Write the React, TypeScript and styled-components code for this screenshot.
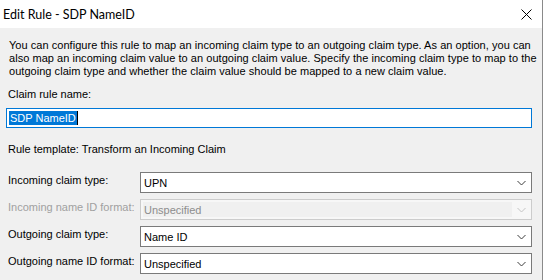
import React from "react";
import styled, { createGlobalStyle } from "styled-components";

const Global = createGlobalStyle`
  html, body {
    margin: 0;
    background: #fff;
  }
  body {
    font-family: "Liberation Sans", Arial, sans-serif;
    font-size: 11px;
    color: #000;
  }
`;

const Window = styled.div`
  width: 542px;
  height: 280px;
  border-right: 1px solid #8a8a8a;
  display: flex;
  flex-direction: column;
  overflow: hidden;
`;

const TitleBar = styled.div`
  height: 28px;
  flex-shrink: 0;
  background: #fff;
  display: flex;
  align-items: center;
  justify-content: space-between;
  padding: 0 10px 0 3px;
  font-family: Lato, "Noto Sans", sans-serif;
  font-size: 12.5px;
`;

const Close = styled.span`
  display: flex;
  align-items: center;
`;

const Content = styled.div`
  flex: 1;
  background: #f0f0f0;
  padding: 11px 10px 0 6px;
  display: flex;
  flex-direction: column;
`;

const Intro = styled.div`
  padding-left: 3px;
  line-height: 13px;
  white-space: nowrap;
  letter-spacing: 0.04px;
`;

const Label = styled.div<{ $disabled?: boolean }>`
  padding-left: 2px;
  line-height: 13px;
  color: ${(p) => (p.$disabled ? "#a0a0a0" : "#000")};
`;

const NameLabel = styled(Label)`
  margin-top: 10px;
`;

const TextBox = styled.div`
  margin-top: 7px;
  height: 18px;
  border: 1px solid #0078d7;
  background: #fff;
  display: flex;
  align-items: center;
  padding-left: 2px;
`;

const Selected = styled.span`
  background: #0078d7;
  color: #fff;
  line-height: 14px;
  padding: 0 1px;
`;

const Caret = styled.span`
  width: 1px;
  height: 14px;
  background: #000;
`;

const Template = styled(Label)`
  margin-top: 15px;
`;

const Rows = styled.div`
  margin-top: 16px;
  display: grid;
  grid-template-columns: 134px 392px;
  row-gap: 6px;
`;

const RowLabel = styled(Label)`
  align-self: start;
  padding-top: 2px;
`;

const Combo = styled.div<{ $disabled?: boolean }>`
  height: 19px;
  border: 1px solid ${(p) => (p.$disabled ? "#cccccc" : "#7a7a7a")};
  background: ${(p) => (p.$disabled ? "#f7f7f7" : "#fff")};
  display: flex;
  align-items: stretch;
`;

const ComboValue = styled.div<{ $disabled?: boolean }>`
  flex: 1;
  display: flex;
  align-items: center;
  margin: ${(p) => (p.$disabled ? "2px 0 2px 2px" : "0")};
  padding-left: ${(p) => (p.$disabled ? "1px" : "3px")};
  background: ${(p) => (p.$disabled ? "#f0f0f0" : "transparent")};
  color: ${(p) => (p.$disabled ? "#8d8d8d" : "#000")};
`;

const Arrow = styled.div`
  width: 19px;
  display: flex;
  align-items: center;
  justify-content: center;
`;

const Chevron = ({ color }: { color: string }) => (
  <svg width="9" height="6" viewBox="0 0 9 6">
    <polyline points="0.5,1 4.5,5 8.5,1" fill="none" stroke={color} strokeWidth="1" />
  </svg>
);

const ComboBox = ({ value, disabled }: { value: string; disabled?: boolean }) => (
  <Combo $disabled={disabled}>
    <ComboValue $disabled={disabled}>{value}</ComboValue>
    <Arrow>
      <Chevron color={disabled ? "#c4c4c4" : "#3c3c3c"} />
    </Arrow>
  </Combo>
);

const rows = [
  { label: "Incoming claim type:", value: "UPN" },
  { label: "Incoming name ID format:", value: "Unspecified", disabled: true },
  { label: "Outgoing claim type:", value: "Name ID" },
  { label: "Outgoing name ID format:", value: "Unspecified" },
];

const App = () => {
  return (
    <Window>
      <Global />
      <TitleBar>
        <span>Edit Rule - SDP NameID</span>
        <Close>
          <svg width="11" height="11" viewBox="0 0 11 11">
            <path d="M0.5 0.5 L10.5 10.5 M10.5 0.5 L0.5 10.5" stroke="#000" strokeWidth="1" />
          </svg>
        </Close>
      </TitleBar>
      <Content>
        <Intro>
          You can configure this rule to map an incoming claim type to an outgoing claim type. As an option, you can
          <br />
          also map an incoming claim value to an outgoing claim value. Specify the incoming claim type to map to the
          <br />
          outgoing claim type and whether the claim value should be mapped to a new claim value.
        </Intro>
        <NameLabel>Claim rule name:</NameLabel>
        <TextBox>
          <Selected>SDP NameID</Selected>
          <Caret />
        </TextBox>
        <Template>Rule template: Transform an Incoming Claim</Template>
        <Rows>
          {rows.map((r) => (
            <React.Fragment key={r.label}>
              <RowLabel $disabled={r.disabled}>{r.label}</RowLabel>
              <ComboBox value={r.value} disabled={r.disabled} />
            </React.Fragment>
          ))}
        </Rows>
      </Content>
    </Window>
  );
};

export default App;
